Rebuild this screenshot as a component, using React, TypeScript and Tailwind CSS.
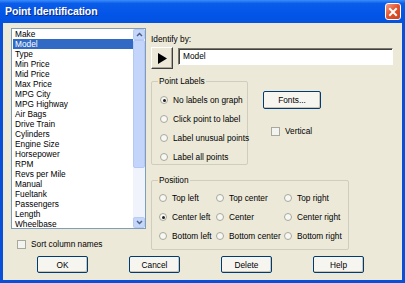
import React from "react";

const fields = [
  "Make", "Model", "Type", "Min Price", "Mid Price", "Max Price", "MPG City", "MPG Highway",
  "Air Bags", "Drive Train", "Cylinders", "Engine Size", "Horsepower", "RPM", "Revs per Mile",
  "Manual", "Fueltank", "Passengers", "Length", "Wheelbase",
];

function Radio({ label, checked }: { label: string; checked?: boolean }) {
  return (
    <div className="flex items-center gap-[5px] h-[10px]">
      <span className="w-[8px] h-[8px] rounded-full border border-[#a8a89c] bg-[#f7f7f3] flex items-center justify-center shrink-0">
        {checked && <span className="w-[3px] h-[3px] rounded-full bg-[#202020]" />}
      </span>
      <span className="whitespace-nowrap">{label}</span>
    </div>
  );
}

function Check({ label }: { label: string }) {
  return (
    <div className="flex items-center gap-[5px]">
      <span className="w-[9px] h-[9px] border border-[#a8a89c] bg-[#f3f3ef] shrink-0" />
      <span>{label}</span>
    </div>
  );
}

function Button({ children, className = "" }: { children: React.ReactNode; className?: string }) {
  return (
    <div className={"border border-[#003c74] rounded-[2px] bg-[#f6f5f0] flex items-center justify-center shadow-[inset_-1px_-1px_0_#c9c6b8] " + className}>
      {children}
    </div>
  );
}

function Group({ title, className = "", children }: { title: string; className?: string; children: React.ReactNode }) {
  return (
    <div className={"relative border border-[#cfcdbf] rounded-[2px] " + className}>
      <span className="absolute -top-[6px] left-[6px] px-[1px] bg-[#ece9d8] leading-[10px]">{title}</span>
      {children}
    </div>
  );
}

export default function App() {
  return (
    <div
      className="w-[405px] h-[283px] flex flex-col bg-[#0a4fd8] text-[8.3px] text-black"
      style={{ fontFamily: "'Liberation Sans', Arial, sans-serif" }}
    >
      <div className="h-[23px] shrink-0 flex items-center justify-between pl-[5px] pr-[4px] bg-[linear-gradient(#3c8dfb_0%,#0a5ce9_15%,#0255e8_60%,#0452e0_100%)]">
        <span className="text-white font-bold text-[10.5px] tracking-[-0.1px] [text-shadow:1px_1px_0_#0a2c8a]">Point Identification</span>
        <div className="w-[16px] h-[17px] rounded-[3px] border border-white bg-[linear-gradient(135deg,#f6a08a,#e2512a_50%,#c9431f)] flex items-center justify-center">
          <svg width="10" height="10" viewBox="0 0 10 10">
            <path d="M2 2 L8 8 M8 2 L2 8" stroke="white" strokeWidth="2" strokeLinecap="square" />
          </svg>
        </div>
      </div>

      <div className="flex-1 mx-[3px] mb-[3px] bg-[#ece9d8] flex flex-col">
        <div className="flex">
          <div className="flex flex-col pl-[8px] pt-[5px]">
            <div className="w-[135px] h-[201px] border border-[#7f9db9] bg-white flex overflow-hidden">
              <div className="flex-1 flex flex-col pl-[1px]">
                {fields.map((f, i) => (
                  <div
                    key={f}
                    className={"h-[10px] shrink-0 leading-[10px] pl-[2px] whitespace-nowrap " + (i === 1 ? "bg-[#316ac5] text-white" : "")}
                  >
                    {f}
                  </div>
                ))}
              </div>
              <div className="w-[12px] flex flex-col bg-[#f0f3fc]">
                <div className="h-[11px] bg-[#c5d6fb] border border-[#b7cbf5] rounded-[2px] flex items-center justify-center">
                  <svg width="7" height="5" viewBox="0 0 7 5"><path d="M1 4 L3.5 1.5 L6 4" stroke="#4d6185" strokeWidth="1.5" fill="none" /></svg>
                </div>
                <div className="h-[128px] bg-[#c4d5fb] border border-[#b4c8f3] rounded-[2px]" />
                <div className="flex-1" />
                <div className="h-[11px] bg-[#c5d6fb] border border-[#b7cbf5] rounded-[2px] flex items-center justify-center">
                  <svg width="7" height="5" viewBox="0 0 7 5"><path d="M1 1 L3.5 3.5 L6 1" stroke="#4d6185" strokeWidth="1.5" fill="none" /></svg>
                </div>
              </div>
            </div>
            <div className="pl-[6px] pt-[9px]">
              <Check label="Sort column names" />
            </div>
          </div>

          <div className="flex flex-col pl-[5px] pt-[11px]">
            <span className="leading-[10px]">Identify by:</span>
            <div className="flex items-start gap-[5px] mt-[3px]">
              <div className="w-[22px] h-[22px] bg-[#ece9d8] border border-t-white border-l-white border-r-[#404040] border-b-[#404040] shadow-[inset_-1px_-1px_0_#aca899] flex items-center justify-center">
                <svg width="10" height="11" viewBox="0 0 10 11"><path d="M1 0 L10 5.5 L1 11 Z" fill="black" /></svg>
              </div>
              <div className="w-[215px] h-[17px] mt-[1px] bg-white border border-t-[#7a7869] border-l-[#7a7869] border-b-white border-r-white shadow-[inset_1px_1px_0_#404040] pl-[4px] flex items-center">
                Model
              </div>
            </div>

            <div className="flex mt-[12px]">
              <Group title="Point Labels" className="w-[97px] h-[84px] pl-[8px] pt-[13px]">
                <div className="flex flex-col gap-[9px]">
                  <Radio label="No labels on graph" checked />
                  <Radio label="Click point to label" />
                  <Radio label="Label unusual points" />
                  <Radio label="Label all points" />
                </div>
              </Group>
              <div className="flex flex-col pl-[15px] pt-[10px]">
                <Button className="w-[58px] h-[18px]">Fonts...</Button>
                <div className="pl-[8px] pt-[16px]">
                  <Check label="Vertical" />
                </div>
              </div>
            </div>

            <Group title="Position" className="w-[198px] h-[70px] mt-[15px] pl-[7px] pt-[12px]">
              <div className="grid grid-cols-[57px_68px_60px] gap-y-[9px]">
                <Radio label="Top left" />
                <Radio label="Top center" />
                <Radio label="Top right" />
                <Radio label="Center left" checked />
                <Radio label="Center" />
                <Radio label="Center right" />
                <Radio label="Bottom left" />
                <Radio label="Bottom center" />
                <Radio label="Bottom right" />
              </div>
            </Group>
          </div>
        </div>

        <div className="flex gap-[41px] pl-[34px] mt-[6px]">
          <Button className="w-[51px] h-[17px]">OK</Button>
          <Button className="w-[51px] h-[17px]">Cancel</Button>
          <Button className="w-[51px] h-[17px]">Delete</Button>
          <Button className="w-[51px] h-[17px]">Help</Button>
        </div>
      </div>
    </div>
  );
}
